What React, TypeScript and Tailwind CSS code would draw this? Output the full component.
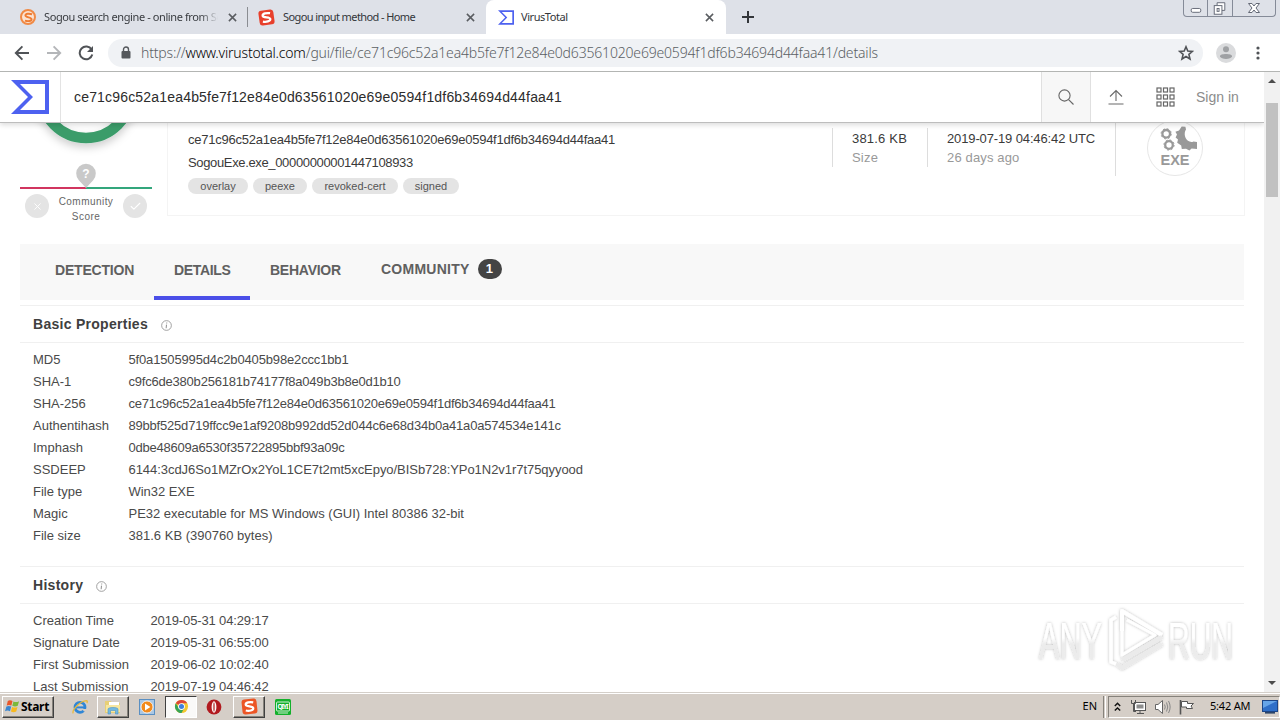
import React from "react";
import { clsx } from "clsx";
import { Check, X } from "lucide-react";

const HASH = "ce71c96c52a1ea4b5fe7f12e84e0d63561020e69e0594f1df6b34694d44faa41";

const tags = [
  { label: "overlay", width: "w-[60px]" },
  { label: "peexe", width: "w-[54px]" },
  { label: "revoked-cert", width: "w-[86px]" },
  { label: "signed", width: "w-[56px]" },
];

const basicProperties = [
  { label: "MD5", value: "5f0a1505995d4c2b0405b98e2ccc1bb1", spacing: "tracking-[-0.15px]" },
  { label: "SHA-1", value: "c9fc6de380b256181b74177f8a049b3b8e0d1b10", spacing: "tracking-[-0.21px]" },
  { label: "SHA-256", value: HASH, spacing: "tracking-[-0.24px]" },
  { label: "Authentihash", value: "89bbf525d719ffcc9e1af9208b992dd52d044c6e68d34b0a41a0a574534e141c", spacing: "tracking-[-0.2px]" },
  { label: "Imphash", value: "0dbe48609a6530f35722895bbf93a09c", spacing: "tracking-[-0.23px]" },
  { label: "SSDEEP", value: "6144:3cdJ6So1MZrOx2YoL1CE7t2mt5xcEpyo/BISb728:YPo1N2v1r7t75qyyood", spacing: "tracking-[-0.05px]" },
  { label: "File type", value: "Win32 EXE", spacing: "tracking-[-0.05px]" },
  { label: "Magic", value: "PE32 executable for MS Windows (GUI) Intel 80386 32-bit", spacing: "tracking-[-0.01px]" },
  { label: "File size", value: "381.6 KB (390760 bytes)", spacing: "tracking-[0.01px]" },
];

const history = [
  { label: "Creation Time", value: "2019-05-31 04:29:17", spacing: "tracking-[-0.14px]" },
  { label: "Signature Date", value: "2019-05-31 06:55:00", spacing: "tracking-[-0.14px]" },
  { label: "First Submission", value: "2019-06-02 10:02:40", spacing: "tracking-[-0.14px]" },
  { label: "Last Submission", value: "2019-07-19 04:46:42", spacing: "tracking-[-0.14px]" },
];

function SigmaLogo({ className }: { className?: string }) {
  return (
    <svg viewBox="0 0 38 34" className={className} fill="#4d61f0">
      <path fillRule="evenodd" d="M0 0H38V34H0L17 17ZM9 4L22 17L9 30H34V4Z" />
    </svg>
  );
}

function SogouS({ className, stroke }: { className?: string; stroke: string }) {
  return (
    <svg viewBox="0 0 16 16" className={className} fill="none" stroke={stroke} strokeWidth="2.4">
      <path d="M12.4 4C9 3 4.2 3.1 4.2 5.6C4.2 8.2 11.8 7.4 11.8 10.1C11.8 12.8 6.8 12.9 3.6 11.8" />
    </svg>
  );
}

function TabClose() {
  return (
    <svg viewBox="0 0 10 10" className="size-[9px] shrink-0" stroke="#5a5d61" strokeWidth="1.7">
      <path d="M1 1L9 9M9 1L1 9" />
    </svg>
  );
}

function TabStrip() {
  return (
    <div className="flex h-[34px] bg-[#dee1e8] font-['Noto_Sans',sans-serif] text-[11px] text-[#33363a]">
      <div className="flex w-[247px] items-center pl-5">
        <span className="relative flex size-4 items-center justify-center rounded-full border-2 border-[#f08a45] bg-[#fbe3d2]">
          <SogouS className="size-[13px] shrink-0" stroke="#ee7d34" />
        </span>
        <span className="ml-2 w-[174px] overflow-hidden whitespace-nowrap bg-linear-to-r from-[#33363a] from-90% to-transparent bg-clip-text tracking-[-0.4px] text-transparent">
          Sogou search engine - online from So
        </span>
        <span className="ml-[10px]">
          <TabClose />
        </span>
      </div>
      <div className="my-[7px] w-px bg-[#8a8d92]" />
      <div className="flex w-[238px] items-center pl-[11px]">
        <span className="flex size-[15px] rotate-[-8deg] items-center justify-center rounded-[3px] bg-[#e8402c]">
          <SogouS className="size-[15px]" stroke="#fff" />
        </span>
        <span className="ml-[9px] w-[183px] tracking-[-0.6px]">Sogou input method - Home</span>
        <TabClose />
      </div>
      <div className="flex w-[240px] items-center rounded-t-lg bg-white pl-3">
        <SigmaLogo className="h-[15px] w-4" />
        <span className="ml-[7px] w-[184px] tracking-[-0.45px]">VirusTotal</span>
        <TabClose />
      </div>
      <svg viewBox="0 0 12 12" className="ml-4 size-3 self-center" stroke="#33363a" strokeWidth="2">
        <path d="M6 0V12M0 6H12" />
      </svg>
      <div className="ml-auto mr-[4px] flex h-[17px] rounded-b-[4px] border border-t-0 border-[#858b98] text-[#646976]">
        <svg viewBox="0 0 24 16" className="h-4 w-6 border-r border-[#858b98]" fill="none" stroke="currentColor">
          <rect x="7.5" y="8.5" width="10" height="4" rx="1.5" fill="#fff" />
        </svg>
        <svg viewBox="0 0 25 16" className="h-4 w-[25px] border-r border-[#858b98]" fill="none" stroke="currentColor">
          <path d="M9.5 5V2.5H17.5V10.5H14.5" fill="#fff" />
          <rect x="6.5" y="5.5" width="8" height="9" fill="#fff" />
          <rect x="9.5" y="8.5" width="2" height="3" />
        </svg>
        <svg viewBox="0 0 42 16" className="h-4 w-[42px]" fill="#fff" stroke="currentColor">
          <path d="M15.5 3.5H19L21 6L23 3.5H26.5L23 8L26.5 12.5H23L21 10L19 12.5H15.5L19 8Z" />
        </svg>
      </div>
    </div>
  );
}

function Toolbar() {
  return (
    <div className="flex h-[38px] items-center border-b border-[#b3b5b3] bg-white">
      <svg viewBox="0 0 16 16" className="ml-[14px] size-4" fill="none" stroke="#505357" strokeWidth="1.9">
        <path d="M15 8H2M8.4 1.4L1.8 8L8.4 14.6" />
      </svg>
      <svg viewBox="0 0 16 16" className="ml-4 size-4" fill="none" stroke="#b4b6b9" strokeWidth="1.9">
        <path d="M1 8H14M7.6 1.4L14.2 8L7.6 14.6" />
      </svg>
      <svg viewBox="0 0 16 16" className="ml-4 size-4" fill="none" stroke="#505357" strokeWidth="2">
        <path d="M13.6 4.6A6.4 6.4 0 1 0 14.3 9.6" />
        <path d="M15 1V7H9Z" fill="#505357" stroke="none" />
      </svg>
      <div className="ml-[14px] flex h-7 w-[1095px] items-center rounded-full bg-[#f0f2f5] pl-[13px] pr-[9px] font-['Noto_Sans',sans-serif] text-[14px]">
        <svg viewBox="0 0 10 13" className="h-[13px] w-[10px]">
          <rect x="0.5" y="5" width="9" height="7.5" rx="1" fill="#55585c" />
          <path d="M2.5 5V3.5A2.5 2.5 0 0 1 7.5 3.5V5" fill="none" stroke="#55585c" strokeWidth="1.4" />
        </svg>
        <span className="ml-[10px] mb-px whitespace-nowrap font-light tracking-[-0.18px] text-[#5b5f64]">
          https://<span className="text-black">www.virustotal.com</span>/gui/file/{HASH}/details
        </span>
        <svg viewBox="0 0 16 16" className="ml-auto size-4" fill="none" stroke="#505357" strokeWidth="1.6">
          <path d="M8 1.8L9.8 6.1L14.4 6.4L10.9 9.4L12 14L8 11.5L4 14L5.1 9.4L1.6 6.4L6.2 6.1Z" />
        </svg>
      </div>
      <svg viewBox="0 0 20 20" className="ml-[13px] size-5">
        <circle cx="10" cy="10" r="10" fill="#dadbdd" />
        <circle cx="10" cy="6.3" r="3" fill="#9fa1a4" />
        <path d="M4 13.2C4 10.4 16 10.4 16 13.2C15 16.8 5 16.8 4 13.2Z" fill="#9fa1a4" />
      </svg>
      <svg viewBox="0 0 4 14" className="ml-5 h-[14px] w-1" fill="#505357">
        <circle cx="2" cy="2" r="1.6" />
        <circle cx="2" cy="7" r="1.6" />
        <circle cx="2" cy="12" r="1.6" />
      </svg>
    </div>
  );
}

function SiteHeader() {
  return (
    <div className="relative z-10 flex h-[51px] shrink-0 items-stretch border-b border-[#bdbdbd] bg-white shadow-[0_2px_5px_rgba(0,0,0,0.14)]">
      <div className="flex w-[61px] items-center border-r border-[#e3e3e3] pl-[11px]">
        <SigmaLogo className="h-[34px] w-[38px]" />
      </div>
      <div className="flex flex-1 items-center pl-[13px] text-[14px] tracking-[0.18px] text-[#2c2c2c]">{HASH}</div>
      <div className="flex w-[50px] items-center justify-center border-x border-[#e0e0e0] bg-[#f7f7f7]">
        <svg viewBox="0 0 16 16" className="size-4" fill="none" stroke="#666" strokeWidth="1.1">
          <circle cx="6.5" cy="6.5" r="5.6" />
          <path d="M10.6 10.6L15.5 15.5" />
        </svg>
      </div>
      <svg viewBox="0 0 16 16" className="ml-[17px] size-4 self-center" fill="none" stroke="#6a6a6a" strokeWidth="1.1">
        <path d="M8 12V2M2 7.5L8 1.5L14 7.5M0.5 15H15.5" />
      </svg>
      <svg viewBox="0 0 19 20" className="ml-8 h-5 w-[19px] self-center" fill="none" stroke="#666" strokeWidth="1.2">
        {[1, 8, 15].map((y) =>
          [1, 7.5, 14].map((x) => <rect key={`${x}-${y}`} x={x} y={y} width="4" height="4" />)
        )}
      </svg>
      <span className="ml-[21px] w-[68px] self-center text-[14px] text-[#8c8c8c]">Sign in</span>
    </div>
  );
}

function CommunityScore() {
  return (
    <div className="w-[132px]">
      <svg viewBox="0 0 132 66" className="block h-[66px] w-[132px] overflow-visible">
        <defs>
          <filter id="ring-shadow" x="-20%" y="-20%" width="140%" height="150%">
            <feDropShadow dx="0" dy="4" stdDeviation="4" floodColor="#000" floodOpacity="0.2" />
          </filter>
        </defs>
        <circle cx="66" cy="-30" r="45" fill="none" stroke="#3b9c6a" strokeWidth="10.5" filter="url(#ring-shadow)" />
        <path d="M0 65H66" stroke="#d1355f" strokeWidth="2" />
        <path d="M66 65H132" stroke="#33a67c" strokeWidth="2" />
        <path d="M66 65L58.8 57.2A9.8 9.8 0 1 1 73.2 57.2Z" fill="#c9c9c9" />
        <text x="66" y="54.5" textAnchor="middle" fontSize="12" fontWeight="bold" fill="#fff">?</text>
      </svg>
      <div className="mt-[5px] flex items-start justify-between px-[5px]">
        <span className="flex size-6 items-center justify-center rounded-full bg-[#e4e4e4]">
          <X className="size-[11px] text-white" strokeWidth={2} />
        </span>
        <span className="text-center text-[10px] leading-[15px] tracking-[0.45px] text-[#666]">
          Community
          <br />
          Score
        </span>
        <span className="flex size-6 items-center justify-center rounded-full bg-[#e4e4e4]">
          <Check className="size-[13px] text-white" strokeWidth={2} />
        </span>
      </div>
    </div>
  );
}

function ExeBadge() {
  return (
    <svg viewBox="0 0 56 56" className="size-14">
      <circle cx="28" cy="28" r="27.5" fill="#fff" stroke="#e6e6e6" />
      <g fill="none" stroke="#999" strokeWidth="2.3">
        <circle cx="19.2" cy="13.8" r="3.8" />
        <circle cx="22" cy="25" r="3.8" />
      </g>
      <g fill="none" stroke="#999" strokeWidth="1" strokeDasharray="1.9 2.1">
        <circle cx="19.2" cy="13.8" r="5.1" />
        <circle cx="22" cy="25" r="5.1" />
      </g>
      <path
        fill="#999"
        d="M34.7 6.4L38.4 6.8L39 9.4C36.4 13 37.8 19.6 42.6 21.6C44.2 22.2 45.4 22 46.4 21.4L50 22V29L44.6 28.6L42.4 30.4L39 28.8L34.8 29L34.2 25.4L30.2 22.8L31 19.4L28.6 17.4L30 14.6L28.4 11.8L32 10.4Z"
      />
      <text x="28" y="44.5" textAnchor="middle" fontSize="14.5" fontWeight="bold" fill="#999">
        EXE
      </text>
    </svg>
  );
}

function FileSummary() {
  return (
    <div className="flex h-[93px] w-[1078px] border border-t-0 border-[#f4f4f4] pl-5">
      <div className="w-[644px] pt-2 text-[13px] leading-[17px] text-[#3a3a3a]">
        <div className="tracking-[-0.24px]">{HASH}</div>
        <div className="mt-[6px] tracking-[-0.35px]">SogouExe.exe_00000000001447108933</div>
        <div className="mt-[7px] flex gap-[5px]">
          {tags.map((tag) => (
            <span
              key={tag.label}
              className={clsx(
                "flex h-4 items-center justify-center rounded-full bg-[#e4e4e4] text-[11px] text-[#555]",
                tag.width
              )}
            >
              {tag.label}
            </span>
          ))}
        </div>
      </div>
      <div className="mt-[5px] h-[39px] w-[95px] border-l border-[#ddd] pl-[19px] pt-px text-[13px] leading-[19px]">
        <div className="tracking-[0.2px] text-[#3a3a3a]">381.6 KB</div>
        <div className="tracking-[0.2px] text-[#999]">Size</div>
      </div>
      <div className="mt-[5px] h-[39px] w-[188px] border-l border-[#ddd] pl-[19px] pt-px text-[13px] leading-[19px]">
        <div className="tracking-[-0.13px] text-[#3a3a3a]">2019-07-19 04:46:42 UTC</div>
        <div className="tracking-[0.15px] text-[#999]">26 days ago</div>
      </div>
      <div className="h-[53px] border-l border-[#ddd]" />
      <div className="-mt-[3px] ml-[31px]">
        <ExeBadge />
      </div>
    </div>
  );
}

function DetailTabs() {
  return (
    <div className="mt-5 flex h-14 bg-[#f8f8f8] pl-[15px] text-[14px] font-bold text-[#606060]">
      <div className="w-[119px] pl-5 pt-4 tracking-[-0.2px]">DETECTION</div>
      <div className="w-24 border-b-4 border-[#4b4fe8] pl-5 pt-4 tracking-[-0.35px]">DETAILS</div>
      <div className="w-[111px] pl-5 pt-4 tracking-[-0.25px]">BEHAVIOR</div>
      <div className="flex items-start pl-5 pt-[15px] tracking-[0.25px]">
        COMMUNITY
        <span className="ml-2 flex h-5 w-6 items-center justify-center rounded-full bg-[#444] text-[13px] text-white">
          1
        </span>
      </div>
    </div>
  );
}

type Row = { label: string; value: string; spacing: string };

function Section({ title, rows, labelWidth }: { title: string; rows: Row[]; labelWidth: string }) {
  return (
    <section>
      <h2 className="flex h-[38px] items-center border-y border-[#f0f0f0] pl-[13px] text-[14px] font-bold tracking-[0.28px] text-[#404040]">
        {title}
        <svg viewBox="0 0 12 12" className="ml-[13px] mt-0.5 size-[11px]" fill="none" stroke="#8e8e8e">
          <circle cx="6" cy="6" r="5.3" strokeWidth="0.9" />
          <path d="M6.3 2.8L6.2 3.8M6 5L5.6 9" strokeWidth="1.1" />
        </svg>
      </h2>
      <div className="pl-[13px] pt-[6px] text-[13px] text-[#4a4a4a]">
        {rows.map((row) => (
          <div key={row.label} className="flex h-[22px] items-center whitespace-nowrap">
            <span className={labelWidth}>{row.label}</span>
            <span className={row.spacing}>{row.value}</span>
          </div>
        ))}
      </div>
    </section>
  );
}

function Watermark() {
  return (
    <svg
      viewBox="0 0 210 75"
      className="pointer-events-none absolute left-[1030px] top-[533px] h-[75px] w-[210px]"
      fontFamily="'Liberation Sans', sans-serif"
    >
      <defs>
        <filter id="soft" x="-10%" y="-10%" width="120%" height="120%">
          <feDropShadow dx="0" dy="0" stdDeviation="1.8" floodColor="#000" floodOpacity="0.28" />
        </filter>
        <linearGradient id="fade" x1="0" y1="0" x2="0" y2="1">
          <stop offset="0.45" stopColor="#fff" />
          <stop offset="0.55" stopColor="#ececec" />
        </linearGradient>
      </defs>
      <g filter="url(#soft)" fill="url(#fade)">
        <text x="9" y="54" fontSize="52" textLength="63" lengthAdjust="spacingAndGlyphs">ANY</text>
        <text x="138" y="54" fontSize="52" textLength="65" lengthAdjust="spacingAndGlyphs">RUN</text>
        <g fill="none" strokeLinejoin="round">
          <path d="M86 12L81 15V57L86 59" stroke="#fff" strokeWidth="3.5" />
          <path d="M92 26V6L132 30" stroke="#fff" strokeWidth="4" />
          <path d="M92 6V50L125 30L97 15" stroke="#fff" strokeWidth="3" />
          <path d="M132 32L92 55M132 39L92 63L87 59" stroke="#ebebeb" strokeWidth="4" />
        </g>
      </g>
    </svg>
  );
}

function Scrollbar() {
  return (
    <div className="flex w-4 flex-col items-center bg-[#f1f1f1] py-[7px]">
      <div className="border-x-4 border-b-4 border-x-transparent border-b-[#4c4c4c]" />
      <div className="mt-5 h-[94px] w-3 bg-[#c1c1c1]" />
      <div className="mt-auto border-x-4 border-t-4 border-x-transparent border-t-[#4c4c4c]" />
    </div>
  );
}

function TaskButton({ children, active }: { children: React.ReactNode; active?: boolean }) {
  return (
    <div
      className={clsx(
        "flex h-[22px] w-8 items-center justify-center border",
        active
          ? "border-b-white border-l-[#404040] border-r-white border-t-[#404040] bg-[#faf9f8]"
          : "border-b-[#404040] border-l-white border-r-[#404040] border-t-white shadow-[inset_-1px_-1px_0_#86827b]"
      )}
    >
      {children}
    </div>
  );
}

function Taskbar() {
  return (
    <div className="flex h-7 items-center border-t border-[#d4cfc9] bg-[#d5cec7] pl-0.5 font-['Noto_Sans',sans-serif] text-[12px] text-black shadow-[inset_0_1px_0_#fff]">
      <div className="flex h-[22px] w-[52px] items-center border border-b-[#404040] border-l-white border-r-[#404040] border-t-white shadow-[inset_-1px_-1px_0_#86827b]">
        <svg viewBox="0 0 16 16" className="ml-0.5 size-[15px] shrink-0">
          <path d="M3 2C5 0.8 6.5 1.4 8 2.2L6.8 7C5.2 6.2 3.6 6 1.8 7Z" fill="#e9572b" />
          <path d="M9 2.6C11 3.6 13 3.4 15 2.3L13.6 7.3C11.6 8.3 9.8 8.2 7.8 7.3Z" fill="#7cb83b" />
          <path d="M1.5 8C3.4 7 5 7.3 6.6 8.1L5.3 13C3.6 12 2 12 0 13Z" fill="#3a86d0" />
          <path d="M7.6 8.4C9.6 9.4 11.4 9.4 13.3 8.4L12 13.3C10 14.3 8.2 14.2 6.3 13.4Z" fill="#f8b91f" />
        </svg>
        <span className="ml-px font-bold tracking-[-0.3px]">Start</span>
      </div>
      <svg viewBox="0 0 16 16" className="ml-[18px] size-4">
        <circle cx="8" cy="8.3" r="5" fill="none" stroke="#2f86d6" strokeWidth="2.8" />
        <path d="M4 8.4H13.4" stroke="#2f86d6" strokeWidth="2" />
        <path d="M10 10H16V12.5H12Z" fill="#d5cec7" />
        <path d="M1.3 14.4C-0.6 11.5 8 1.8 14.6 1.6C15.6 1.8 15.4 3.2 14.8 4" fill="none" stroke="#e8b93c" strokeWidth="1.3" />
      </svg>
      <div className="ml-[9px]">
        <TaskButton>
          <svg viewBox="0 0 18 16" className="h-4 w-[18px]">
            <path d="M1 2H7L8 4H16V14H1Z" fill="#e7cf77" />
            <rect x="5" y="3" width="10" height="4" fill="#fff" />
            <path d="M2 6H16V13H2Z" fill="#f6e6a0" />
            <path d="M4 15V10C4 8 14 8 14 10V15H11.5V11.5H6.5V15Z" fill="#74b9e0" stroke="#4b96c8" strokeWidth="0.6" />
          </svg>
        </TaskButton>
      </div>
      <svg viewBox="0 0 16 16" className="ml-[10px] size-4">
        <rect x="0.5" y="0.5" width="15" height="15" fill="#a9c7e4" stroke="#5a8fc2" />
        <circle cx="8" cy="8" r="6" fill="#f28a1c" stroke="#fff" strokeWidth="0.8" />
        <path d="M6 4.6L11.4 8L6 11.4Z" fill="#fff" />
      </svg>
      <div className="ml-[10px]">
        <TaskButton active>
          <svg viewBox="0 0 16 16" className="size-[15px]">
            <circle cx="8" cy="8" r="7" fill="#f3c72f" />
            <path d="M8 8L1.94 4.5A7 7 0 0 1 14.06 4.5H8Z" fill="#dd4536" />
            <path d="M1.94 4.5A7 7 0 0 0 8 15L11 9.7L5 9.7Z" fill="#37a457" />
            <circle cx="8" cy="8" r="3.6" fill="#fff" />
            <circle cx="8" cy="8" r="2.7" fill="#3f7fdc" />
          </svg>
        </TaskButton>
      </div>
      <svg viewBox="0 0 16 16" className="ml-[9px] size-4">
        <ellipse cx="8" cy="8" rx="7.4" ry="7.6" fill="#b11a1f" />
        <ellipse cx="8" cy="8" rx="2.4" ry="5.8" fill="#fff" />
        <ellipse cx="8" cy="8" rx="1.1" ry="4.8" fill="#cd7272" />
      </svg>
      <div className="ml-[11px]">
        <TaskButton>
          <span className="flex size-[15px] rotate-[-6deg] items-center justify-center rounded-[3px] bg-[#ec5525]">
            <SogouS className="size-[15px]" stroke="#fff" />
          </span>
        </TaskButton>
      </div>
      <svg viewBox="0 0 16 16" className="ml-[10px] size-4">
        <rect width="16" height="16" rx="1.5" fill="#14b02c" />
        <rect x="1.5" y="3" width="13" height="9" rx="1" fill="none" stroke="#fff" strokeWidth="0.8" />
        <text x="8" y="10.2" textAnchor="middle" fontSize="6.5" fontWeight="bold" fill="#fff" textLength="11">QIYI</text>
        <path d="M3 14H13" stroke="#fff" strokeWidth="0.8" />
      </svg>
      <span className="ml-auto text-[11px]">EN</span>
      <div className="ml-[6px] h-[22px] w-[3px] border-l border-r border-l-[#86827b] border-r-white" />
      <div className="ml-[2px] flex h-[22px] w-[172px] items-center border border-b-white border-l-[#86827b] border-r-white border-t-[#86827b] text-[11px]">
        <svg viewBox="0 0 7 10" className="ml-[5px] h-[10px] w-[7px] shrink-0" fill="none" stroke="#111" strokeWidth="1.4">
          <path d="M0.8 4L3.5 1.3L6.2 4M0.8 8.6L3.5 5.9L6.2 8.6" />
        </svg>
        <svg viewBox="0 0 16 16" className="ml-[9px] size-4 shrink-0" fill="none" stroke="#555">
          <rect x="4.5" y="3.5" width="11" height="8" fill="#fff" />
          <rect x="6.5" y="5.5" width="7" height="4" fill="#8d8d8d" stroke="none" />
          <path d="M7 14.5H14M10 12V14" />
          <path d="M1.5 1V4.5H5.5V1M3.5 5V12.5H6" />
        </svg>
        <svg viewBox="0 0 17 16" className="ml-2 h-4 w-[17px] shrink-0" fill="none" stroke="#666">
          <path d="M1.5 5.5H4L8.5 1.5V14.5L4 10.5H1.5Z" fill="#fff" />
          <path d="M10.5 5.5Q12 8 10.5 10.5M12.5 3.5Q15 8 12.5 12.5M14.5 2Q17.8 8 14.5 14" stroke="#888" />
        </svg>
        <svg viewBox="0 0 16 16" className="ml-[7px] size-4 shrink-0" fill="#fff" stroke="#555">
          <path d="M2.5 1V15.5" strokeWidth="1.6" />
          <path d="M3.5 2.5H9.5V4.5H15.5L13 7L14.5 9.5H8.5V8H3.5Z" />
        </svg>
        <span className="ml-4 whitespace-nowrap tracking-[-0.2px]">5:42 AM</span>
        <svg viewBox="0 0 16 14" className="ml-auto mr-px h-[14px] w-[16px] shrink-0">
          <rect x="0.5" y="0.5" width="15" height="11" fill="#2f6fc8" stroke="#1c4688" />
          <path d="M1 1H15L1 8Z" fill="#66a5e8" />
          <rect x="3" y="12" width="10" height="1.6" fill="#2c4468" />
        </svg>
      </div>
    </div>
  );
}

export default function App() {
  return (
    <div className="flex h-[720px] w-[1280px] flex-col overflow-hidden bg-white font-['Liberation_Sans',Arial,sans-serif]">
      <TabStrip />
      <Toolbar />
      <div className="relative flex h-[620px]">
        <main className="flex w-[1264px] flex-col overflow-hidden">
          <SiteHeader />
          <div className="h-[569px] overflow-hidden pl-5">
            <div className="flex gap-[15px]">
              <CommunityScore />
              <FileSummary />
            </div>
            <div className="w-[1224px]">
              <DetailTabs />
              <div className="mt-[5px] space-y-[19px]">
                <Section title="Basic Properties" rows={basicProperties} labelWidth="w-[95.5px]" />
                <Section title="History" rows={history} labelWidth="w-[117.5px]" />
              </div>
            </div>
          </div>
        </main>
        <Scrollbar />
        <Watermark />
      </div>
      <Taskbar />
    </div>
  );
}
